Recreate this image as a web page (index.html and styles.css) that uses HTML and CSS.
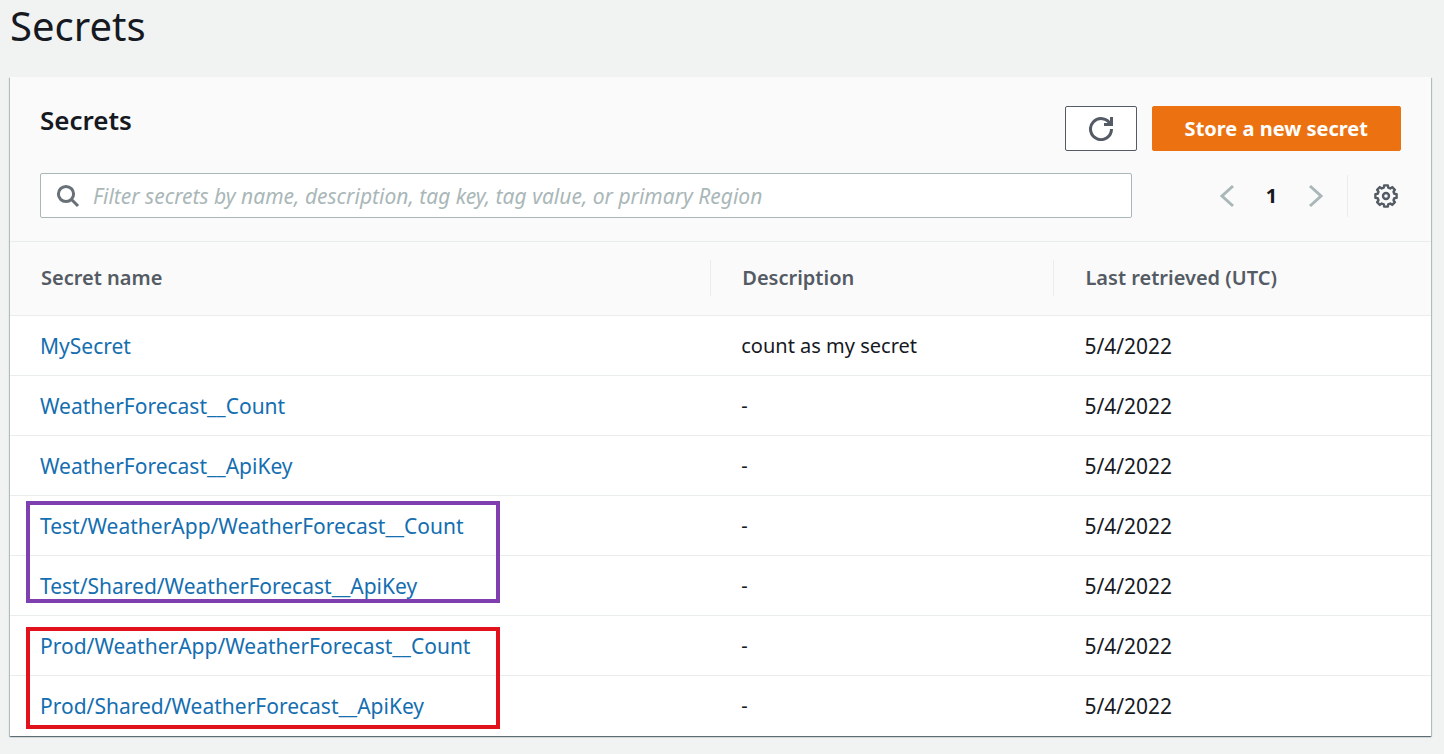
FILE: index.html
```html
<!DOCTYPE html>
<html lang="en">
<head>
<meta charset="utf-8">
<meta name="viewport" content="width=device-width, initial-scale=1">
<title>Secrets</title>
<link rel="stylesheet" href="styles.css">
</head>
<body>
<main class="page">
  <h1 class="page-title">Secrets</h1>
  <section class="panel" aria-labelledby="panel-title">
    <header class="panel-header">
      <div class="title-row">
        <h2 class="panel-title" id="panel-title">Secrets</h2>
        <div class="actions">
          <button class="button button-refresh" type="button" aria-label="Refresh">
            <svg class="icon" viewBox="0 0 16 16" aria-hidden="true"><path d="M10 5h5V0M15 8a7 7 0 1 1-.7-3"/></svg>
          </button>
          <button class="button button-primary" type="button">Store a new secret</button>
        </div>
      </div>
      <div class="filter-row">
        <label class="search">
          <svg class="icon search-icon" viewBox="0 0 24 24" aria-hidden="true"><circle cx="10" cy="10" r="7.6"/><path d="M15.5 15.5l6.5 6.5"/></svg>
          <input class="search-input" type="text" aria-label="Filter secrets" placeholder="Filter secrets by name, description, tag key, tag value, or primary Region">
        </label>
        <div class="tools">
          <nav class="pagination" aria-label="Pages">
            <button class="icon-button" type="button" aria-label="Previous page">
              <svg class="icon chevron" viewBox="0 0 24 24" aria-hidden="true"><path d="M18 2L7 12l11 10"/></svg>
            </button>
            <button class="page-number" type="button" aria-current="page">1</button>
            <button class="icon-button" type="button" aria-label="Next page">
              <svg class="icon chevron" viewBox="0 0 24 24" aria-hidden="true"><path d="M6 2l11 10L6 22"/></svg>
            </button>
          </nav>
          <div class="settings">
            <button class="icon-button" type="button" aria-label="Preferences">
              <svg class="icon gear" viewBox="0 0 24 24" aria-hidden="true"><path d="M20.3 9.8L22.6 10.1V13.9L20.3 14.2L19.5 16.3L20.9 18.2L18.2 20.9L16.3 19.5L14.2 20.3L13.9 22.6H10.1L9.8 20.3L7.7 19.5L5.8 20.9L3.1 18.2L4.5 16.3L3.7 14.2L1.4 13.9V10.1L3.7 9.8L4.5 7.7L3.1 5.8L5.8 3.1L7.7 4.5L9.8 3.7L10.1 1.4H13.9L14.2 3.7L16.3 4.5L18.2 3.1L20.9 5.8L19.5 7.7Z"/><circle cx="12" cy="12" r="3"/></svg>
            </button>
          </div>
        </div>
      </div>
    </header>
    <div class="table-wrap">
      <table class="secrets">
        <colgroup><col class="col-name"><col class="col-description"><col></colgroup>
        <thead>
          <tr>
            <th scope="col"><div class="head">Secret name</div></th>
            <th scope="col"><div class="head">Description</div></th>
            <th scope="col"><div class="head">Last retrieved (UTC)</div></th>
          </tr>
        </thead>
        <tbody>
          <tr><td><a href="#">MySecret</a></td><td class="description">count as my secret</td><td>5/4/2022</td></tr>
          <tr><td><a href="#">WeatherForecast__Count</a></td><td class="description">-</td><td>5/4/2022</td></tr>
          <tr><td><a href="#">WeatherForecast__ApiKey</a></td><td class="description">-</td><td>5/4/2022</td></tr>
          <tr><td><a href="#">Test/WeatherApp/WeatherForecast__Count</a></td><td class="description">-</td><td>5/4/2022</td></tr>
          <tr><td><a href="#">Test/Shared/WeatherForecast__ApiKey</a></td><td class="description">-</td><td>5/4/2022</td></tr>
          <tr><td><a href="#">Prod/WeatherApp/WeatherForecast__Count</a></td><td class="description">-</td><td>5/4/2022</td></tr>
          <tr><td><a href="#">Prod/Shared/WeatherForecast__ApiKey</a></td><td class="description">-</td><td>5/4/2022</td></tr>
        </tbody>
      </table>
      <div class="highlight highlight-test"></div>
      <div class="highlight highlight-prod"></div>
    </div>
  </section>
</main>
</body>
</html>
```
FILE: styles.css
```css
* {
  box-sizing: border-box;
}

body {
  margin: 0;
  background: #f1f3f3;
  color: #16191f;
  font-family: "Noto Sans", "Open Sans", sans-serif;
  font-size: 20px;
  line-height: 28px;
}

button,
input {
  margin: 0;
  font: inherit;
}

.page {
  padding: 0 13px 16px 10px;
}

.page-title {
  margin: 0;
  padding-bottom: 25px;
  font-size: 40px;
  font-weight: 400;
  line-height: 52px;
}

.panel {
  padding-bottom: 1px;
  background: #fff;
  box-shadow: 0 1px 1px 0 rgba(0, 28, 36, 0.4), 1px 1px 1px 0 rgba(0, 28, 36, 0.2), -1px 1px 1px 0 rgba(0, 28, 36, 0.2);
}

.panel-header {
  display: flex;
  flex-direction: column;
  gap: 22px;
  padding: 29px 30px 23px;
  background: #fafafa;
  border-bottom: 1px solid #eaeded;
}

.title-row,
.filter-row,
.actions,
.tools,
.pagination {
  display: flex;
}

.title-row {
  justify-content: space-between;
}

.panel-title {
  margin: 0;
  font-size: 26px;
  font-weight: 600;
  line-height: 28px;
}

.actions {
  gap: 15px;
}

.button {
  height: 45px;
  padding: 0 32px;
  border: 1px solid #545b64;
  border-radius: 2px;
  background: #fff;
  color: #545b64;
  font-weight: 700;
}

.button-refresh {
  display: flex;
  align-items: center;
  padding: 0 23px;
}

.button-primary {
  border-color: #ec7211;
  background: #ec7211;
  color: #fff;
}

.icon {
  display: block;
  width: 24px;
  height: 24px;
  fill: none;
  stroke: #545b64;
  stroke-width: 2;
}

.filter-row {
  justify-content: space-between;
  gap: 79px;
}

.search {
  display: flex;
  flex: 1;
  align-items: center;
  gap: 13px;
  height: 45px;
  padding: 0 15px;
  border: 1px solid #aab7b8;
  border-radius: 2px;
  background: #fff;
}

.search-icon {
  stroke: #687078;
  stroke-width: 3;
}

.search-input {
  flex: 1;
  min-width: 0;
  padding: 0;
  border: 0;
  outline: 0;
  background: transparent;
  color: #16191f;
  font-size: 21px;
}

.search-input::placeholder {
  color: #aab7b8;
  font-style: italic;
  opacity: 1;
}

.tools {
  align-items: center;
}

.pagination {
  align-items: center;
  gap: 10px;
  padding-right: 15px;
}

.icon-button,
.page-number {
  display: flex;
  justify-content: center;
  padding: 0 4px;
  border: 0;
  background: transparent;
  color: #16191f;
}

.page-number {
  width: 37px;
  font-weight: 700;
}

.chevron {
  stroke: #aab7b8;
  stroke-width: 3;
}

.settings {
  padding: 9px 0 9px 22px;
  border-left: 1px solid #eaeded;
}

.settings .icon-button {
  padding: 0 3px 0 4px;
}

.gear {
  stroke-linejoin: round;
  stroke-width: 2.4;
}

.table-wrap {
  position: relative;
}

.secrets {
  width: 100%;
  border-collapse: collapse;
  table-layout: fixed;
}

.col-name {
  width: 49.35%;
}

.col-description {
  width: 24.15%;
}

th,
td {
  padding: 0 30px;
  text-align: left;
}

th {
  height: 73px;
  padding: 0;
  background: #fafafa;
  color: #545b64;
  font-weight: 600;
}

.head {
  padding: 4px 31px;
  border-right: 1px solid #eaeded;
}

th:last-child .head {
  border-right: 0;
}

td {
  height: 60px;
  padding-top: 2px;
  border-top: 1px solid #eaeded;
  font-size: 21px;
}

.description {
  font-size: 20px;
}

a {
  color: #146eb0;
  text-decoration: none;
}

.highlight {
  position: absolute;
  left: 16px;
  width: 474px;
  height: 102px;
  border: 4px solid #7f3fae;
  pointer-events: none;
}

.highlight-test {
  top: 259px;
}

.highlight-prod {
  top: 385px;
  border-color: #e1121b;
}
```
